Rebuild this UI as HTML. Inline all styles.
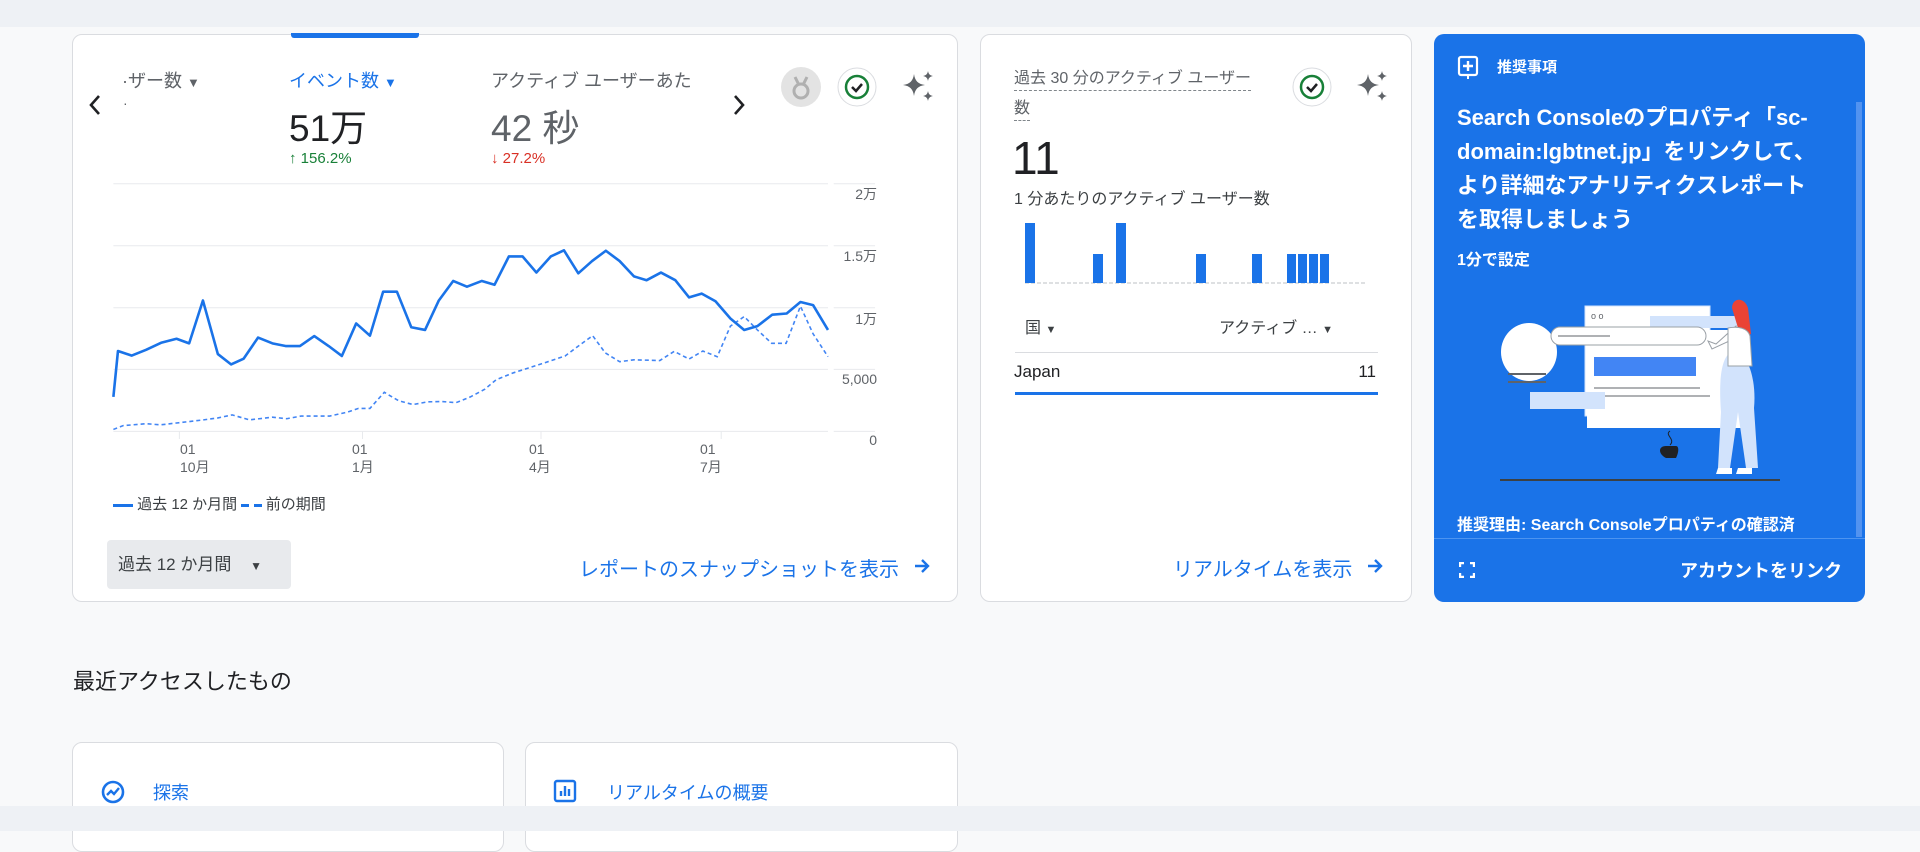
<!DOCTYPE html>
<html><head><meta charset="utf-8"><style>
*{margin:0;padding:0;box-sizing:border-box}
body{width:1920px;height:831px;background:#f8f9fa;position:relative;overflow:hidden;font-family:"Liberation Sans","Noto Sans CJK JP",sans-serif;color:#3c4043}
.a{position:absolute;white-space:nowrap}
.card{position:absolute;background:#fff;border:1px solid #dadce0;border-radius:10px}
.blue{color:#1a73e8}
</style></head><body>
<div class="a" style="left:0;top:0;width:1920px;height:27px;background:#eef1f5"></div>

<!-- card 1 -->
<div class="card" style="left:72px;top:34px;width:886px;height:568px"></div>
<div class="a" style="left:291px;top:33px;width:128px;height:5px;background:#1a73e8;border-radius:0 0 3px 3px"></div>
<svg class="a" style="left:88px;top:94px" width="14" height="22"><path d="M11 2L3 11l8 9" fill="none" stroke="#202124" stroke-width="2.6"/></svg>
<div class="a" style="left:122px;top:67px;font-size:18px;color:#5f6368">·ザー数 <span style="font-size:13px">▼</span></div>
<div class="a" style="left:123px;top:95px;font-size:14px;color:#5f6368">·</div>
<div class="a blue" style="left:289px;top:67px;font-size:18px">イベント数 <span style="font-size:13px">▼</span></div>
<div class="a" style="left:289px;top:98px;font-size:37px;color:#202124">51万</div>
<div class="a" style="left:289px;top:150px;font-size:15px;color:#188038"><b>↑</b> 156.2%</div>
<div class="a" style="left:491px;top:67px;font-size:18px;color:#5f6368">アクティブ ユーザーあた</div>
<div class="a" style="left:491px;top:98px;font-size:37px;color:#5f6368">42 秒</div>
<div class="a" style="left:491px;top:150px;font-size:15px;color:#d93025"><b>↓</b> 27.2%</div>
<svg class="a" style="left:732px;top:94px" width="14" height="22"><path d="M3 2l8 9-8 9" fill="none" stroke="#202124" stroke-width="2.6"/></svg>
<svg class="a" style="left:781px;top:67px" width="40" height="40"><circle cx="20" cy="20" r="20" fill="#e3e3e3"/><path d="M14 10l4 8M26 10l-4 8" stroke="#b0b0b0" stroke-width="3"/><circle cx="20" cy="24" r="7" fill="none" stroke="#b0b0b0" stroke-width="3"/></svg>
<svg class="a" style="left:837px;top:67px" width="40" height="40"><circle cx="20" cy="20" r="19" fill="#fff" stroke="#dadce0"/><circle cx="20" cy="20" r="11" fill="none" stroke="#188038" stroke-width="2.5"/><path d="M15 20l4 4 6-7" fill="none" stroke="#202124" stroke-width="2.5"/></svg>
<svg class="a" style="left:900px;top:68px" width="36" height="36"><path d="M14 6c1 7 4 10 11 11-7 1-10 4-11 11-1-7-4-10-11-11 7-1 10-4 11-11z" fill="#5f6368"/><path d="M28 3c.5 3 2 4.5 5 5-3 .5-4.5 2-5 5-.5-3-2-4.5-5-5 3-.5 4.5-2 5-5zM28 23c.5 3 2 4.5 5 5-3 .5-4.5 2-5 5-.5-3-2-4.5-5-5 3-.5 4.5-2 5-5z" fill="#5f6368"/></svg>

<!-- chart -->
<svg class="a" style="left:60px;top:20px" width="900" height="600" viewBox="0 0 1568 1568" preserveAspectRatio="none">
<g stroke="#e8eaed" stroke-width="1">
<line x1="93" y1="428" x2="1338" y2="428" vector-effect="non-scaling-stroke"/><line x1="93" y1="590" x2="1338" y2="590" vector-effect="non-scaling-stroke"/><line x1="93" y1="752" x2="1338" y2="752" vector-effect="non-scaling-stroke"/><line x1="93" y1="913" x2="1338" y2="913" vector-effect="non-scaling-stroke"/><line x1="93" y1="1075" x2="1338" y2="1075" vector-effect="non-scaling-stroke"/>
<line x1="1348" y1="428" x2="1420" y2="428" vector-effect="non-scaling-stroke"/><line x1="1348" y1="590" x2="1420" y2="590" vector-effect="non-scaling-stroke"/><line x1="1348" y1="752" x2="1420" y2="752" vector-effect="non-scaling-stroke"/><line x1="1348" y1="913" x2="1420" y2="913" vector-effect="non-scaling-stroke"/><line x1="1348" y1="1075" x2="1420" y2="1075" vector-effect="non-scaling-stroke"/>
<line x1="208" y1="1075" x2="208" y2="1095" vector-effect="non-scaling-stroke"/><line x1="527" y1="1075" x2="527" y2="1095" vector-effect="non-scaling-stroke"/><line x1="838" y1="1075" x2="838" y2="1095" vector-effect="non-scaling-stroke"/><line x1="1152" y1="1075" x2="1152" y2="1095" vector-effect="non-scaling-stroke"/>
</g>
<polyline vector-effect="non-scaling-stroke" fill="none" stroke="#4285f4" stroke-width="1.6" stroke-dasharray="4 3" points="93,1070 110,1060 150,1055 175,1058 210,1052 250,1045 275,1040 300,1032 330,1045 370,1038 395,1042 420,1035 470,1035 500,1025 520,1015 540,1015 565,973 590,995 615,1005 640,998 665,997 690,1000 715,985 740,965 760,940 790,922 815,910 840,898 880,878 905,850 928,825 950,870 975,893 1000,888 1045,890 1070,866 1096,886 1120,865 1145,880 1168,800 1192,775 1215,810 1240,845 1265,845 1290,748 1312,820 1338,880"/>
<polyline vector-effect="non-scaling-stroke" fill="none" stroke="#1a73e8" stroke-width="2.6" stroke-linejoin="round" points="93,985 101,865 125,877 150,862 177,843 203,833 225,845 249,733 275,873 298,900 320,885 345,830 370,845 393,852 418,852 443,826 468,852 491,878 516,793 540,825 563,710 587,710 612,803 636,810 660,733 685,682 709,697 735,682 757,692 782,618 806,618 830,660 855,618 878,602 903,662 927,630 951,603 975,630 1000,670 1022,680 1047,660 1072,680 1096,725 1118,715 1142,735 1168,780 1192,810 1215,800 1241,770 1266,767 1290,737 1312,745 1338,810"/>
</svg>
<div class="a" style="left:820px;top:184px;width:57px;text-align:right;font-size:14px;color:#5f6368">2万</div>
<div class="a" style="left:820px;top:246px;width:57px;text-align:right;font-size:14px;color:#5f6368">1.5万</div>
<div class="a" style="left:820px;top:309px;width:57px;text-align:right;font-size:14px;color:#5f6368">1万</div>
<div class="a" style="left:820px;top:371px;width:57px;text-align:right;font-size:14px;color:#5f6368">5,000</div>
<div class="a" style="left:820px;top:432px;width:57px;text-align:right;font-size:14px;color:#5f6368">0</div>
<div class="a" style="left:180px;top:440px;font-size:14px;color:#5f6368;line-height:18px">01<br>10月</div>
<div class="a" style="left:352px;top:440px;font-size:14px;color:#5f6368;line-height:18px">01<br>1月</div>
<div class="a" style="left:529px;top:440px;font-size:14px;color:#5f6368;line-height:18px">01<br>4月</div>
<div class="a" style="left:700px;top:440px;font-size:14px;color:#5f6368;line-height:18px">01<br>7月</div>
<div class="a" style="left:113px;top:493px;font-size:15px;color:#3c4043"><span style="display:inline-block;width:20px;height:3px;background:#1a73e8;vertical-align:middle"></span> 過去 12 か月間 <span style="display:inline-block;width:8px;height:3px;background:#1a73e8;vertical-align:middle"></span> <span style="display:inline-block;width:8px;height:3px;background:#1a73e8;vertical-align:middle"></span> 前の期間</div>
<div class="a" style="left:107px;top:540px;width:184px;height:49px;background:#e8eaed;border-radius:4px;font-size:17px;line-height:49px;padding-left:11px;color:#3c4043">過去 12 か月間 <span style="margin-left:14px;font-size:12px">▼</span></div>
<div class="a blue" style="left:579px;top:553px;font-size:20px">レポートのスナップショットを表示</div>
<svg class="a" style="left:913px;top:557px" width="18" height="18"><path d="M2 9h13M9 3l6 6-6 6" fill="none" stroke="#1a73e8" stroke-width="2.4"/></svg>

<!-- card 2 -->
<div class="card" style="left:980px;top:34px;width:432px;height:568px"></div>
<div class="a" style="left:1014px;top:68px;font-size:16px;color:#5f6368;border-bottom:1px dashed #80868b;line-height:22px">過去 30 分のアクティブ ユーザー</div>
<div class="a" style="left:1014px;top:98px;font-size:16px;color:#5f6368;border-bottom:1px dashed #80868b;line-height:22px">数</div>
<svg class="a" style="left:1292px;top:67px" width="40" height="40"><circle cx="20" cy="20" r="19" fill="#fff" stroke="#dadce0"/><circle cx="20" cy="20" r="11" fill="none" stroke="#188038" stroke-width="2.5"/><path d="M15 20l4 4 6-7" fill="none" stroke="#202124" stroke-width="2.5"/></svg>
<svg class="a" style="left:1354px;top:68px" width="36" height="36"><path d="M14 6c1 7 4 10 11 11-7 1-10 4-11 11-1-7-4-10-11-11 7-1 10-4 11-11z" fill="#5f6368"/><path d="M28 3c.5 3 2 4.5 5 5-3 .5-4.5 2-5 5-.5-3-2-4.5-5-5 3-.5 4.5-2 5-5zM28 23c.5 3 2 4.5 5 5-3 .5-4.5 2-5 5-.5-3-2-4.5-5-5 3-.5 4.5-2 5-5z" fill="#5f6368"/></svg>
<div class="a" style="left:1012px;top:131px;font-size:46px;color:#202124">11</div>
<div class="a" style="left:1014px;top:185px;font-size:16px;color:#3c4043">1 分あたりのアクティブ ユーザー数</div>
<svg class="a" style="left:1015px;top:220px" width="360" height="66">
<line x1="10" y1="63" x2="350" y2="63" stroke="#bdc1c6" stroke-dasharray="4 2"/>
<g fill="#1a73e8"><rect x="10" y="3" width="10" height="60"/><rect x="78" y="34" width="10" height="29"/><rect x="101" y="3" width="10" height="60"/><rect x="181" y="34" width="10" height="29"/><rect x="237" y="34" width="10" height="29"/><rect x="272" y="34" width="9" height="29"/><rect x="283" y="34" width="9" height="29"/><rect x="294" y="34" width="9" height="29"/><rect x="305" y="34" width="9" height="29"/></g></svg>
<div class="a" style="left:1025px;top:314px;font-size:16px;color:#3c4043">国 <span style="font-size:11px">▼</span></div>
<div class="a" style="left:1219px;top:314px;font-size:16px;color:#3c4043">アクティブ … <span style="font-size:11px">▼</span></div>
<div class="a" style="left:1015px;top:352px;width:363px;height:1px;background:#dadce0"></div>
<div class="a" style="left:1014px;top:362px;font-size:17px;color:#202124">Japan</div>
<div class="a" style="left:1336px;top:362px;width:40px;text-align:right;font-size:17px;color:#202124">11</div>
<div class="a" style="left:1015px;top:392px;width:363px;height:3px;background:#1a73e8"></div>
<div class="a blue" style="left:1173px;top:553px;font-size:20px">リアルタイムを表示</div>
<svg class="a" style="left:1366px;top:557px" width="18" height="18"><path d="M2 9h13M9 3l6 6-6 6" fill="none" stroke="#1a73e8" stroke-width="2.4"/></svg>

<!-- card 3 -->
<div class="a" style="left:1434px;top:34px;width:431px;height:568px;background:#1a73e8;border-radius:10px;overflow:hidden">
<div class="a" style="left:422px;top:68px;width:6px;height:435px;background:#8ab4f8;opacity:.5"></div>
<div class="a" style="left:0;top:504px;width:431px;height:1px;background:#4d94f0"></div>
</div>
<svg class="a" style="left:1457px;top:55px" width="22" height="26"><rect x="2" y="2" width="18" height="18" rx="2" fill="none" stroke="#fff" stroke-width="2.2"/><path d="M11 20v4" stroke="#fff" stroke-width="2"/><path d="M11 6v10M6 11h10" stroke="#fff" stroke-width="2.4"/></svg>
<div class="a" style="left:1497px;top:56px;font-size:15px;font-weight:bold;color:#fff">推奨事項</div>
<div class="a" style="left:1457px;top:101px;font-size:22px;font-weight:bold;color:#fff;line-height:34px">Search Consoleのプロパティ「sc-<br>domain:lgbtnet.jp」をリンクして、<br>より詳細なアナリティクスレポート<br>を取得しましょう</div>
<div class="a" style="left:1457px;top:246px;font-size:16px;color:#fff;font-weight:bold">1分で設定</div>
<svg class="a" style="left:1500px;top:296px" width="290" height="188">
<ellipse cx="29" cy="56" rx="28" ry="29" fill="#fff"/>
<rect x="85" y="10" width="125" height="110" fill="#fff" stroke="#d2e3fc"/>
<rect x="150" y="20" width="95" height="12" fill="#d2e3fc"/>
<rect x="87" y="34" width="160" height="98" fill="#fff"/>
<rect x="94" y="61" width="102" height="19" fill="#4285f4"/>
<line x1="94" y1="92" x2="200" y2="92" stroke="#5f6368"/><line x1="94" y1="100" x2="210" y2="100" stroke="#5f6368"/>
<rect x="51" y="31" width="155" height="18" rx="9" fill="#fff" stroke="#9aa0a6"/>
<line x1="58" y1="40" x2="110" y2="40" stroke="#5f6368"/>
<text x="91" y="23" font-size="9" fill="#5f6368">o o</text>
<rect x="30" y="96" width="75" height="17" fill="#d2e3fc"/>
<line x1="8" y1="78" x2="46" y2="78" stroke="#5f6368" stroke-width="2"/><line x1="8" y1="86" x2="46" y2="86" stroke="#5f6368" stroke-width="2"/>
<path d="M238 56c-15-4-20 20-17 60l-3 56h12l8-56 8 56h12l-4-60c2-20-2-48-16-56z" fill="#d2e3fc"/>
<path d="M236 30l-20 18 -8 -3 4 8 26-12z" fill="#fff" stroke="#9aa0a6"/>
<path d="M232 12c0-10 12-12 16 0l3 26-10 4z" fill="#ea4335"/>
<path d="M228 32c10-2 20 0 22 8l2 30-24 0z" fill="#fff" stroke="#9aa0a6"/>
<path d="M218 172h14v6h-16zM238 172h14v6h-16z" fill="#fff"/>
<path d="M166 150c-8 0-8 8 0 12h10c3-6 3-12 0-12z" fill="#202124"/>
<path d="M170 135c-6 4 6 8 0 14" fill="none" stroke="#202124"/>
<line x1="0" y1="184" x2="280" y2="184" stroke="#3c4043" stroke-width="2"/>
</svg>
<div class="a" style="left:1457px;top:511px;font-size:16px;color:#fff;font-weight:bold">推奨理由: Search Consoleプロパティの確認済</div>
<svg class="a" style="left:1459px;top:562px" width="16" height="16"><path d="M1 5V1h4M11 1h4v4M15 11v4h-4M5 15H1v-4" fill="none" stroke="#fff" stroke-width="2.4"/></svg>
<div class="a" style="left:1662px;top:557px;width:180px;text-align:right;font-size:18px;font-weight:bold;color:#fff">アカウントをリンク</div>

<!-- recent -->
<div class="a" style="left:73px;top:664px;font-size:22px;color:#202124">最近アクセスしたもの</div>
<div class="card" style="left:72px;top:742px;width:432px;height:110px"></div>
<div class="card" style="left:525px;top:742px;width:433px;height:110px"></div>
<svg class="a" style="left:100px;top:779px" width="26" height="26"><circle cx="13" cy="13" r="10" fill="none" stroke="#1a73e8" stroke-width="2.6"/><path d="M7 16l4-4 3 3 5-6" fill="none" stroke="#1a73e8" stroke-width="2.4"/></svg>
<div class="a blue" style="left:153px;top:779px;font-size:18px">探索</div>
<svg class="a" style="left:553px;top:779px" width="24" height="24"><rect x="2" y="2" width="20" height="20" rx="2" fill="none" stroke="#1a73e8" stroke-width="2.4"/><path d="M8 17v-5M12 17V7M16 17v-7" stroke="#1a73e8" stroke-width="2.4"/></svg>
<div class="a blue" style="left:607px;top:779px;font-size:18px">リアルタイムの概要</div>
<div class="a" style="left:0;top:806px;width:1920px;height:25px;background:#eef1f5"></div>
</body></html>
